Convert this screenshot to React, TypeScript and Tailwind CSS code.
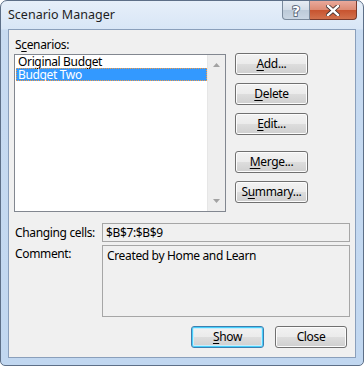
const Key = ({ children }: { children: string }) => (
  <span className="underline underline-offset-[2px] decoration-[1px]">{children}</span>
);

const Btn = ({ children, className = "", def = false }: { children: React.ReactNode; className?: string; def?: boolean }) => (
  <div
    className={
      "flex items-center justify-center rounded-[3px] border text-[12px] leading-none text-black bg-[linear-gradient(#f2f2f2_0%,#ebebeb_50%,#dddddd_51%,#cfcfcf_100%)] " +
      (def
        ? "border-[#3c7fb1] shadow-[inset_0_0_0_1px_#48d0fb,inset_0_0_0_2px_#c9edfc] "
        : "border-[#707070] shadow-[inset_0_0_0_1px_#fcfcfc] ") +
      className
    }
  >
    <span className="-mt-[1px]">{children}</span>
  </div>
);

const App = () => {
  return (
    <div className="w-[364px] h-[366px] bg-white font-['Noto_Sans',sans-serif] tracking-[-0.35px]">
      <div className="w-[364px] h-[366px] flex flex-col rounded-t-[7px] rounded-b-[5px] border border-[#5d6f87] bg-[linear-gradient(#e6eff9_0px,#d8e6f6_28px,#c8dbf1_29px,#c1d7f0_100%)] px-[7px] pb-[7px]">
        {/* title bar */}
        <div className="h-[28px] flex items-start justify-between">
          <div className="pt-[6px] text-[12.5px] leading-[16px] tracking-normal text-[#1e1e1e]">Scenario Manager</div>
          <div className="flex mr-[-1px]">
            <div className="w-[28px] h-[19px] flex items-center justify-center rounded-bl-[4px] border border-t-0 border-[#7a8a9c] bg-[linear-gradient(#e6ecf3_0%,#d3dce7_50%,#bccad8_51%,#c9d6e3_100%)]">
              <svg width="12" height="15" viewBox="0 0 12 15">
                <text x="6" y="13" textAnchor="middle" fontFamily="DejaVu Sans, sans-serif" fontWeight="bold" fontSize="14" fill="#ffffff" stroke="#4a586c" strokeWidth="1.6" paintOrder="stroke">?</text>
              </svg>
            </div>
            <div className="w-[47px] h-[19px] flex items-center justify-center rounded-br-[4px] border border-t-0 border-l-0 border-[#7a3a2c] bg-[linear-gradient(#e9a99b_0%,#dc8a73_50%,#c7532f_51%,#d2714d_100%)]">
              <svg width="14" height="11" viewBox="0 0 14 11">
                <path d="M2 1 L12 10 M12 1 L2 10" stroke="#3b2b2b" strokeWidth="4" strokeLinecap="square" />
                <path d="M2 1 L12 10 M12 1 L2 10" stroke="#ffffff" strokeWidth="2.4" strokeLinecap="square" />
              </svg>
            </div>
          </div>
        </div>

        {/* client area */}
        <div className="flex-1 border border-[#8a9fbb] bg-[#f0f0f0] pl-[5px] pt-[7px] text-[12px] text-black">
          <div className="h-[17px] leading-[16px] pl-[1px]">
            S<Key>c</Key>enarios:
          </div>

          <div className="flex gap-[9px]">
            {/* list */}
            <div className="w-[212px] h-[158px] flex border border-[#828790] bg-white">
              <div className="flex-1 pl-[1px]">
                <div className="h-[13px] leading-[13px] pl-[2px]">Original Budget</div>
                <div className="h-[13px] leading-[13px] pl-[2px] bg-[#3399ff] text-white outline outline-1 outline-dotted -outline-offset-1 outline-[#f49b45]">Budget Two</div>
              </div>
              <div className="w-[18px] flex flex-col items-center justify-between bg-[#eeeeee] border-l border-[#e6e6e6] py-[8px]">
                <svg width="7" height="4" viewBox="0 0 7 4"><path d="M0 4 L3.5 0 L7 4 Z" fill="#a2a2a2" /></svg>
                <svg width="7" height="4" viewBox="0 0 7 4"><path d="M0 0 L3.5 4 L7 0 Z" fill="#a2a2a2" /></svg>
              </div>
            </div>

            {/* buttons */}
            <div className="flex flex-col -mt-[1px]">
              <Btn className="w-[73px] h-[22px]"><Key>A</Key>dd...</Btn>
              <Btn className="w-[73px] h-[22px] mt-[8px]"><Key>D</Key>elete</Btn>
              <Btn className="w-[73px] h-[22px] mt-[8px]"><Key>E</Key>dit...</Btn>
              <Btn className="w-[73px] h-[22px] mt-[16px]"><Key>M</Key>erge...</Btn>
              <Btn className="w-[73px] h-[22px] mt-[8px]">S<Key>u</Key>mmary...</Btn>
            </div>
          </div>

          {/* fields */}
          <div className="mt-[11px] flex items-center">
            <div className="w-[88px] pl-[1px] leading-[16px]">Changing cells:</div>
            <div className="w-[248px] h-[19px] border border-[#a6a6a6] pl-[3px] leading-[17px]">$B$7:$B$9</div>
          </div>
          <div className="mt-[3px] flex items-start">
            <div className="w-[88px] pl-[1px] pt-[1px] leading-[16px]">Comment:</div>
            <div className="w-[248px] h-[72px] border border-[#a6a6a6] pl-[4px] pt-[2px] leading-[16px]">Created by Home and Learn</div>
          </div>

          <div className="mt-[9px] flex justify-end gap-[11px] pr-[8px]">
            <Btn def className="w-[73px] h-[22px]"><Key>S</Key>how</Btn>
            <Btn className="w-[72px] h-[22px]">Close</Btn>
          </div>
        </div>
      </div>
    </div>
  );
};

export default App;
